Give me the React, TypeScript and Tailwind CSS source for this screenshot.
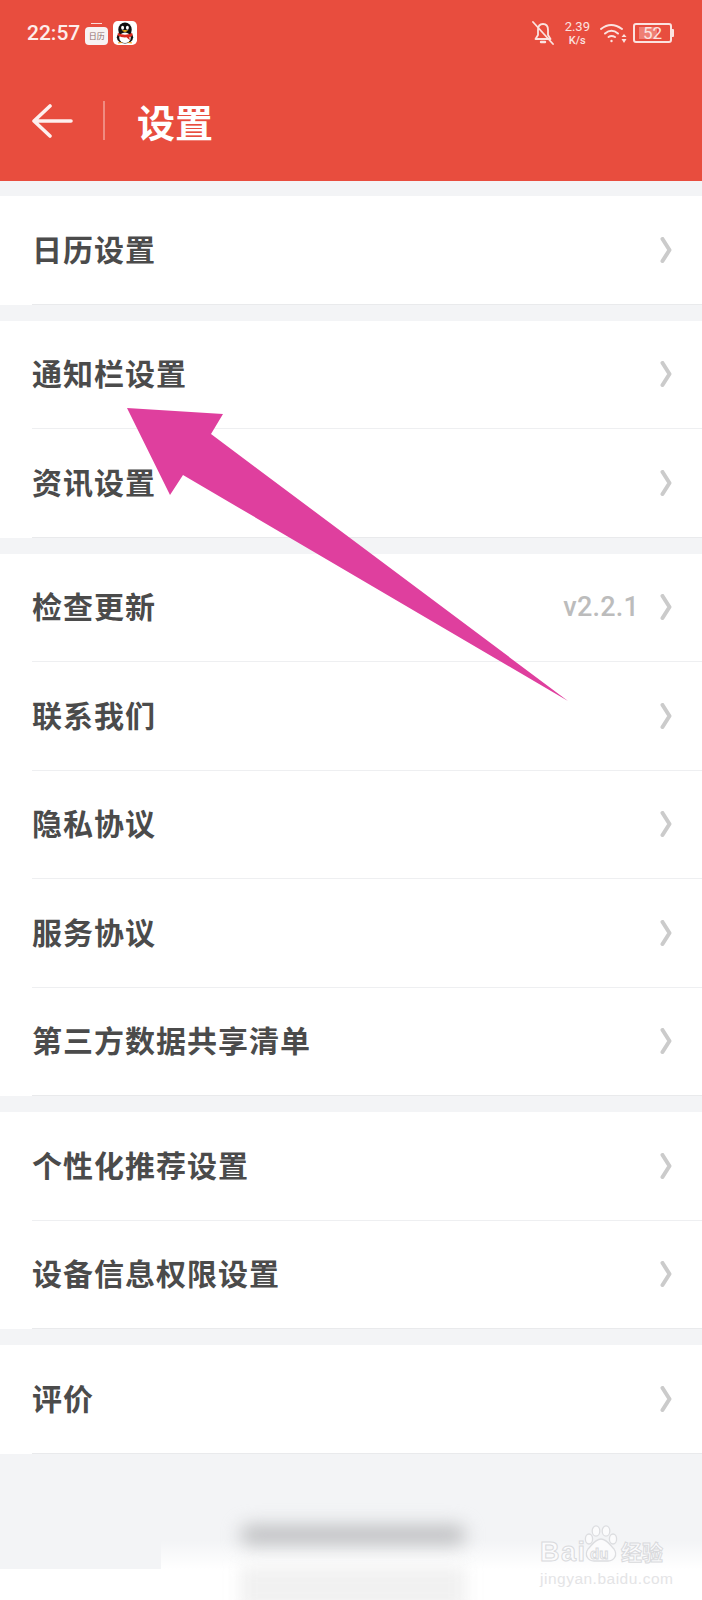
const SANS = `font-['Noto_Sans_CJK_SC',sans-serif]`;

function Chevron() {
  return (
    <svg width="12" height="26" viewBox="0 0 12 26" className="shrink-0">
      <path d="M2.5 2 L9.5 13 L2.5 24" fill="none" stroke="#cbcbcb" strokeWidth="4" strokeLinejoin="round" strokeLinecap="round" />
    </svg>
  );
}

function Row({ label, value, last }: { label: string; value?: string; last?: boolean }) {
  return (
    <div className="h-[108.5px] bg-white pl-8">
      <div className={`flex h-full items-center justify-between pr-[30px] border-b ${last ? "border-[#e9eaec]" : "border-[#eeeff1]"}`}>
        <span className="mb-[4px] font-['Noto_Sans_CJK_SC',sans-serif] font-bold text-[30px] leading-none tracking-[1px] text-[#4b4b4b]">{label}</span>
        <div className="flex items-center gap-[21px]">
          {value && <span className="font-['Roboto',sans-serif] font-medium text-[27px] leading-none tracking-[0.2px] text-[#bcbcbc]">{value}</span>}
          <Chevron />
        </div>
      </div>
    </div>
  );
}

function Group({ labels }: { labels: [string, string?][] }) {
  return (
    <div className="flex flex-col">
      {labels.map(([l, v], i) => (
        <Row key={l} label={l} value={v} last={i === labels.length - 1} />
      ))}
    </div>
  );
}

function Penguin() {
  return (
    <svg width="24" height="24" viewBox="0 0 25 25">
      <rect width="25" height="25" rx="5" fill="#fff" />
      <ellipse cx="12.5" cy="9" rx="7" ry="7.5" fill="#111" />
      <ellipse cx="12.5" cy="17" rx="8.5" ry="6.5" fill="#111" />
      <ellipse cx="12.5" cy="17.5" rx="6" ry="5.5" fill="#fff" />
      <path d="M5 12.5 Q12.5 16 20 12.5 L20.5 15 Q18 17 17 16.5 L17.5 20 L14 17 Q9 17.5 5 15 Z" fill="#d92a1f" />
      <ellipse cx="10" cy="7" rx="1.5" ry="2" fill="#fff" />
      <ellipse cx="15" cy="7" rx="1.5" ry="2" fill="#fff" />
      <path d="M9 10 Q12.5 8.5 16 10 Q12.5 13 9 10 Z" fill="#f2b21c" />
      <path d="M5 22.5 Q8 21 10 23 L5.5 23.5 Z M20 22.5 Q17 21 15 23 L19.5 23.5 Z" fill="#f2a01c" />
    </svg>
  );
}

function CalendarIcon() {
  return (
    <div className="relative w-[23px] h-[22px] mt-[2px]">
      <div className="absolute left-[6px] right-[6px] top-0 h-[1px] bg-white/80" />
      <div className="absolute inset-x-0 top-[4px] bottom-0 rounded-[4px] bg-[#f7f3f3] flex items-center justify-center">
        <span className="font-['Noto_Sans_CJK_SC',serif] text-[8px] leading-none text-[#8a6a6a]">日历</span>
      </div>
    </div>
  );
}

function BellOff() {
  return (
    <svg width="24" height="24" viewBox="0 0 24 24" fill="none" stroke="#fbe3e0" strokeWidth="1.8" strokeLinecap="round" strokeLinejoin="round">
      <path d="M12 3 C8.5 3 7 5.6 7 9 V14 L4.5 18 H19.5 L17 14 V9 C17 5.6 15.5 3 12 3 Z" />
      <path d="M10 21 H14" strokeWidth="2.4" />
      <path d="M2 1 L22 23" />
    </svg>
  );
}

function Wifi() {
  return (
    <svg width="27" height="20" viewBox="0 0 27 20" fill="none" stroke="#fbe3e0" strokeWidth="2" strokeLinecap="round">
      <path d="M1 6 Q11 -2 22 6" />
      <path d="M5 10.5 Q11.5 5 18 10.5" />
      <path d="M8.5 14 Q11.5 12 15 14" />
      <circle cx="11.5" cy="18" r="1.2" fill="#fbe3e0" stroke="none" />
      <path d="M24 11 L26.5 14 H21.5 Z M24 20 L26.5 16 H21.5 Z" fill="#fbe3e0" stroke="none" />
    </svg>
  );
}

function Battery() {
  return (
    <div className="flex items-center">
      <div className="relative w-[39px] h-[20px] rounded-[3px] border-2 border-[#fbe3e0] overflow-hidden">
        <div className="absolute left-[4px] top-[2px] bottom-[2px] w-[18px] bg-[#ef7f74]" />
        <span className="absolute inset-0 flex items-center justify-center font-['Roboto',sans-serif] text-[17px] leading-none text-[#fbe3e0]">52</span>
      </div>
      <div className="w-[2px] h-[8px] bg-[#fbe3e0] rounded-r-[1px]" />
    </div>
  );
}

function Paw() {
  return (
    <svg width="38" height="38" viewBox="0 0 38 38" fill="#fbfbfc" stroke="#dcdde0" strokeWidth="1.3">
      <ellipse cx="7" cy="14" rx="3.6" ry="5" />
      <ellipse cx="14" cy="6" rx="3.8" ry="5.2" />
      <ellipse cx="24" cy="6" rx="3.8" ry="5.2" />
      <ellipse cx="31" cy="14" rx="3.6" ry="5" />
      <path d="M19 14 C13 14 10 20 6 24 C2 30 6 36 12 36 C16 36 22 36 26 36 C32 36 36 30 32 24 C28 20 25 14 19 14 Z" />
    </svg>
  );
}

export default function App() {
  return (
    <div className="relative h-[1600px] w-[702px] overflow-hidden bg-[#f3f4f6]">
      <header className="h-[181px] bg-[#e84d3e] text-white">
        <div className="flex h-[66px] items-center justify-between pl-[27px] pr-[28px]">
          <div className="flex items-center gap-[5px]">
            <span className="font-['Roboto',sans-serif] font-medium text-[21px] leading-none text-[#fdeeec]">22:57</span>
            <CalendarIcon />
            <Penguin />
          </div>
          <div className="flex items-center">
            <BellOff />
            <div className="ml-[10px] mr-[10px] flex flex-col items-center font-['Roboto',sans-serif] text-[#fbe3e0] leading-none">
              <span className="text-[13px]">2.39</span>
              <span className="mt-[2px] text-[11px] font-medium">K/s</span>
            </div>
            <Wifi />
            <div className="ml-[6px]"><Battery /></div>
          </div>
        </div>
        <div className="flex h-[115px] items-center pb-[6px] pl-[32px]">
          <svg width="41" height="36" viewBox="0 0 41 36" fill="none" stroke="#fdf0ee" strokeWidth="3.6" strokeLinecap="round" strokeLinejoin="round">
            <path d="M39 18 H3 M18 3 L2 18 L18 33" />
          </svg>
          <div className="ml-[30px] h-[39px] w-[2px] bg-white/35" />
          <span className={`ml-[32px] ${SANS} font-bold text-[38px] leading-none text-white`}>设置</span>
        </div>
      </header>

      <main className="flex flex-col gap-[16px] pt-[15px]">
        <Group labels={[["日历设置"]]} />
        <Group labels={[["通知栏设置"], ["资讯设置"]]} />
        <Group labels={[["检查更新", "v2.2.1"], ["联系我们"], ["隐私协议"], ["服务协议"], ["第三方数据共享清单"]]} />
        <Group labels={[["个性化推荐设置"], ["设备信息权限设置"]]} />
        <Group labels={[["评价"]]} />
      </main>

      {/* bottom white band, blurred toast and its fade */}
      <div className="absolute inset-x-0 top-[1569px] bottom-0 bg-white" />
      <div className="absolute left-[161px] right-0 top-[1540px] h-[29px] bg-gradient-to-b from-transparent to-white" />
      <div className="absolute left-[240px] top-[1525px] h-[20px] w-[226px] rounded-full bg-[#bfc0c2] blur-[9px]" />
      <div className="absolute left-[240px] top-[1566px] h-[44px] w-[226px] bg-[#f1f1f1] blur-[8px]" />

      {/* watermark */}
      <div className="absolute left-[540px] top-[1525px] w-[126px]">
        <div className="relative h-[38px]">
          <span className="absolute left-0 top-[14px] font-['Liberation_Sans',sans-serif] font-bold text-[27px] leading-none tracking-[1.5px] text-[#fbfbfc] [-webkit-text-stroke:1px_#d9dadd]">Bai</span>
          <div className="absolute left-[42px] top-0"><Paw /></div>
          <span className="absolute left-[50px] top-[21px] font-['Liberation_Sans',sans-serif] font-bold text-[15px] leading-none text-[#fbfbfc] [-webkit-text-stroke:1px_#d9dadd]">du</span>
          <span className="absolute left-[81px] top-[16px] font-['Noto_Sans_CJK_SC',sans-serif] font-bold text-[21px] leading-none text-[#fbfbfc] [-webkit-text-stroke:1px_#d9dadd]">经验</span>
        </div>
        <span className="mt-[8px] block whitespace-nowrap font-['Liberation_Sans',sans-serif] text-[15.5px] leading-none tracking-[0.5px] text-[#e4e4e6]">jingyan.baidu.com</span>
      </div>

      {/* annotation arrow */}
      <svg className="absolute inset-0 pointer-events-none" width="702" height="1600" viewBox="0 0 702 1600">
        <polygon points="127,408 223,414 211,434 568,701 183,475 170,495" fill="#df3f9e" />
      </svg>
    </div>
  );
}
